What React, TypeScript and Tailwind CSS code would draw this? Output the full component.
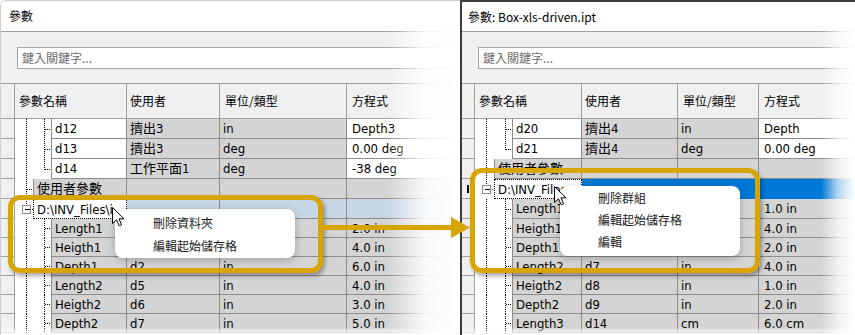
import React from "react";

type Row = {
  kind: "child" | "group" | "folder";
  name: string;
  user?: string;
  unit?: string;
  eq?: string;
  white?: boolean;
  last?: boolean;
  h: 20 | 19;
};

type Geo = {
  outerX: number;
  innerX: number;
  groupIndent: number;
  childIndent: number;
  headW: string;
  nameColW: string;
  nameChildW: string;
  nameGroupW: string;
  userW: string;
  unitW: string;
  selected: "soft" | "blue";
};

const latin =
  "font-['DejaVu_Sans_Condensed','Liberation_Sans','Noto_Sans_CJK_TC',sans-serif]";
const cjk = "font-['Noto_Sans_CJK_TC','Liberation_Sans',sans-serif]";

// user/unit left empty where the context menu hides them in the screenshot
const leftRows: Row[] = [
  { kind: "child", name: "d12", user: "擠出3", unit: "in", eq: "Depth3", white: true, h: 20 },
  { kind: "child", name: "d13", user: "擠出3", unit: "deg", eq: "0.00 deg", white: true, h: 20 },
  { kind: "child", name: "d14", user: "工作平面1", unit: "deg", eq: "-38 deg", white: true, last: true, h: 20 },
  { kind: "group", name: "使用者參數", h: 20 },
  { kind: "folder", name: "D:\\INV_Files\\i", h: 20 },
  { kind: "child", name: "Length1", eq: "2.0 in", h: 19 },
  { kind: "child", name: "Heigth1", eq: "4.0 in", h: 19 },
  { kind: "child", name: "Depth1", user: "d2", unit: "in", eq: "6.0 in", h: 19 },
  { kind: "child", name: "Length2", user: "d5", unit: "in", eq: "4.0 in", h: 19 },
  { kind: "child", name: "Heigth2", user: "d6", unit: "in", eq: "3.0 in", h: 19 },
  { kind: "child", name: "Depth2", user: "d7", unit: "in", eq: "5.0 in", h: 19 },
];

const rightRows: Row[] = [
  { kind: "child", name: "d20", user: "擠出4", unit: "in", eq: "Depth", white: true, h: 20 },
  { kind: "child", name: "d21", user: "擠出4", unit: "deg", eq: "0.00 deg", white: true, last: true, h: 20 },
  { kind: "group", name: "使用者參數", h: 20 },
  { kind: "folder", name: "D:\\INV_Files", h: 20 },
  { kind: "child", name: "Length1", eq: "1.0 in", h: 20 },
  { kind: "child", name: "Heigth1", eq: "4.0 in", h: 19 },
  { kind: "child", name: "Depth1", eq: "2.0 in", h: 19 },
  { kind: "child", name: "Length2", user: "d7", unit: "in", eq: "4.0 in", h: 19 },
  { kind: "child", name: "Heigth2", user: "d8", unit: "in", eq: "1.0 in", h: 19 },
  { kind: "child", name: "Depth2", user: "d9", unit: "in", eq: "2.0 in", h: 19 },
  { kind: "child", name: "Length3", user: "d14", unit: "cm", eq: "6.0 cm", h: 19 },
];

const leftGeo: Geo = {
  outerX: 11,
  innerX: 29,
  groupIndent: 18,
  childIndent: 36,
  headW: "w-[14px]",
  nameColW: "w-[112px]",
  nameChildW: "w-[76px]",
  nameGroupW: "w-[94px]",
  userW: "w-[93px]",
  unitW: "w-[127px]",
  selected: "soft",
};

const rightGeo: Geo = {
  outerX: 11,
  innerX: 30,
  groupIndent: 19,
  childIndent: 37,
  headW: "w-[13px]",
  nameColW: "w-[107px]",
  nameChildW: "w-[70px]",
  nameGroupW: "w-[88px]",
  userW: "w-[96px]",
  unitW: "w-[81px]",
  selected: "blue",
};

function Tree({ row, g }: { row: Row; g: Geo }) {
  const w = row.kind === "child" ? g.childIndent : g.groupIndent;
  const h = row.h;
  const mid = Math.floor(h / 2) + 0.5;
  const ox = g.outerX + 0.5;
  const ix = g.innerX + 0.5;
  const dot = { stroke: "#000", strokeWidth: 1, strokeDasharray: "1 1" };
  return (
    <svg width={w} height={h} className="shrink-0 bg-white" shapeRendering="crispEdges">
      {row.kind !== "folder" && <line x1={ox} y1={0} x2={ox} y2={h} {...dot} />}
      {row.kind === "child" && (
        <>
          <line x1={ix} y1={0} x2={ix} y2={row.last ? mid : h} {...dot} />
          <line x1={ix} y1={mid} x2={w} y2={mid} {...dot} />
        </>
      )}
      {row.kind === "group" && <line x1={ox} y1={mid} x2={w} y2={mid} {...dot} />}
      {row.kind === "folder" && (
        <>
          <line x1={ox} y1={0} x2={ox} y2={mid - 5} {...dot} />
          <rect x={ox - 4} y={mid - 4} width={8} height={8} fill="#fff" stroke="#8c8c8c" />
          <line x1={ox - 2} y1={mid} x2={ox + 3} y2={mid} stroke="#000" />
          <line x1={ox + 5} y1={mid} x2={w} y2={mid} {...dot} />
        </>
      )}
    </svg>
  );
}

function Table({ rows, g }: { rows: Row[]; g: Geo }) {
  const line = "border-[#8c8c8c]";
  return (
    <div className="flex flex-col">
      <div className={`flex h-[36px] border-t border-[#a0a0a0] bg-[#f0f0f0] text-[12px] text-black ${cjk}`}>
        <div className={`${g.headW} shrink-0 border-r border-b border-[#a0a0a0]`} />
        <div className={`${g.nameColW} shrink-0 flex items-center pl-[4px] border-r border-b border-[#a0a0a0]`}>參數名稱</div>
        <div className={`${g.userW} shrink-0 flex items-center pl-[3px] border-r border-b border-[#a0a0a0]`}>使用者</div>
        <div className={`${g.unitW} shrink-0 flex items-center pl-[5px] border-r border-b border-[#a0a0a0]`}>單位/類型</div>
        <div className="flex-1 flex items-center pl-[5px] border-b border-[#a0a0a0] whitespace-nowrap">方程式</div>
      </div>
      {rows.map((r, i) => {
        const hc = r.h === 20 ? "h-[20px]" : "h-[19px]";
        const isFolder = r.kind === "folder";
        const sel = isFolder
          ? g.selected === "blue"
            ? "bg-[#0078d7] border-[#0078d7]"
            : `bg-[#c8d7e6] ${line}`
          : `bg-[#d4d4d4] ${line}`;
        const nameBg = r.white ? "bg-white" : "bg-[#d4d4d4]";
        return (
          <div key={i} className={`flex ${hc} text-[13px] text-black leading-none ${latin}`}>
            <div className={`${g.headW} shrink-0 bg-[#f0f0f0] border-r border-b border-[#a0a0a0] flex items-center justify-center`}>
              {isFolder && g.selected === "blue" && <div className="w-[2px] h-[8px] bg-black" />}
            </div>
            <Tree row={r} g={g} />
            {isFolder ? (
              <div className={`${g.nameGroupW} shrink-0 bg-white border border-dotted border-black flex items-center pl-[3px] overflow-hidden whitespace-nowrap`}>
                {r.name}
              </div>
            ) : (
              <div
                className={`${r.kind === "child" ? g.nameChildW : g.nameGroupW} shrink-0 ${nameBg} border-l border-r border-b ${line} flex items-center pl-[3px] overflow-hidden whitespace-nowrap`}
              >
                {r.name}
              </div>
            )}
            <div className={`${g.userW} shrink-0 border-r border-b ${sel} flex items-center pl-[3px] whitespace-nowrap`}>
              {r.user}
            </div>
            <div className={`${g.unitW} shrink-0 border-r border-b ${sel} flex items-center pl-[3px] whitespace-nowrap`}>
              {r.unit}
            </div>
            <div className={`flex-1 border-b ${r.white ? `bg-white ${line}` : sel} flex items-center pl-[5px] whitespace-nowrap`}>
              {r.eq}
            </div>
          </div>
        );
      })}
    </div>
  );
}

function Cursor() {
  return (
    <svg width="13" height="20" viewBox="0 0 13 20">
      <path
        d="M0.5 0.5 V16.5 L4.5 12.8 L7.2 18.8 L9.6 17.8 L7 11.8 H12 Z"
        fill="#fff"
        stroke="#000"
        strokeWidth="1"
      />
    </svg>
  );
}

function Search() {
  return (
    <div className={`ml-[16px] mb-[14px] h-[22px] bg-white border border-[#a5a5a5] flex items-center pl-[4px] text-[12px] text-[#6d6d6d] ${cjk}`}>
      鍵入關鍵字...
    </div>
  );
}

export default function App() {
  return (
    <div className="relative w-[855px] h-[335px] overflow-hidden bg-white flex">
      {/* left window, cropped */}
      <div className="relative w-[460px] shrink-0 flex flex-col border-t border-l border-[#cfcfcf] rounded-tl-[6px] overflow-hidden">
        <div className={`h-[31px] shrink-0 bg-white border-b border-[#a0a0a0] flex items-center pl-[8px] text-[12px] text-black ${cjk}`}>
          參數
        </div>
        <div className="flex-1 bg-[#f0f0f0] pt-[15px]">
          <Search />
          <Table rows={leftRows} g={leftGeo} />
        </div>
        <div className="absolute right-0 top-0 h-full w-[72px] bg-linear-to-r from-white/0 via-white/85 to-white" />
        <div className="absolute left-0 bottom-0 w-full h-[8px] bg-linear-to-b from-white/0 to-white" />
      </div>

      {/* right window, cropped */}
      <div className="relative flex-1 flex flex-col border-t-2 border-l-2 border-[#3c3c3c] overflow-hidden">
        <div className={`h-[30px] shrink-0 bg-white border-b border-[#a0a0a0] flex items-center pl-[6px] text-[12px] text-black ${cjk}`}>
          參數: Box-xls-driven.ipt
        </div>
        <div className="flex-1 bg-[#f0f0f0] pt-[15px]">
          <Search />
          <Table rows={rightRows} g={rightGeo} />
        </div>
        <div className="absolute right-0 top-0 h-full w-[34px] bg-linear-to-r from-white/0 via-white/70 to-white" />
        <div className="absolute left-0 bottom-0 w-full h-[8px] bg-linear-to-b from-white/0 to-white" />
      </div>

      {/* context menus */}
      <div className={`absolute left-[115px] top-[209px] w-[180px] h-[49px] bg-white rounded-[8px] shadow-[0_2px_8px_rgba(0,0,0,0.25)] pt-[2px] text-[12px] text-[#1a1a1a] ${cjk}`}>
        <div className="h-[23px] flex items-center pl-[38px]">刪除資料夾</div>
        <div className="h-[23px] flex items-center pl-[38px]">編輯起始儲存格</div>
      </div>
      <div className={`absolute left-[560px] top-[186px] w-[180px] h-[70px] bg-white rounded-[8px] shadow-[0_2px_8px_rgba(0,0,0,0.25)] pt-[1px] text-[12px] text-[#1a1a1a] ${cjk}`}>
        <div className="h-[22px] flex items-center pl-[38px]">刪除群組</div>
        <div className="h-[22px] flex items-center pl-[38px]">編輯起始儲存格</div>
        <div className="h-[22px] flex items-center pl-[38px]">編輯</div>
      </div>

      {/* cursors */}
      <div className="absolute left-[112px] top-[207px]">
        <Cursor />
      </div>
      <div className="absolute left-[554px] top-[186px]">
        <Cursor />
      </div>

      {/* callout frames and arrow */}
      <div className="absolute left-[8px] top-[195px] w-[315px] h-[78px] rounded-[12px] border-[5px] border-[#d8a500] shadow-[2px_3px_4px_rgba(0,0,0,0.35)]" />
      <div className="absolute left-[470px] top-[168px] w-[290px] h-[105px] rounded-[12px] border-[5px] border-[#d8a500] shadow-[2px_3px_4px_rgba(0,0,0,0.35)]" />
      <svg className="absolute left-[320px] top-[215px]" width="152" height="26" viewBox="0 0 152 26">
        <rect x="0" y="10" width="134" height="5" fill="#d8a500" />
        <polygon points="131,2 150,12.5 131,23" fill="#d8a500" />
      </svg>
    </div>
  );
}
